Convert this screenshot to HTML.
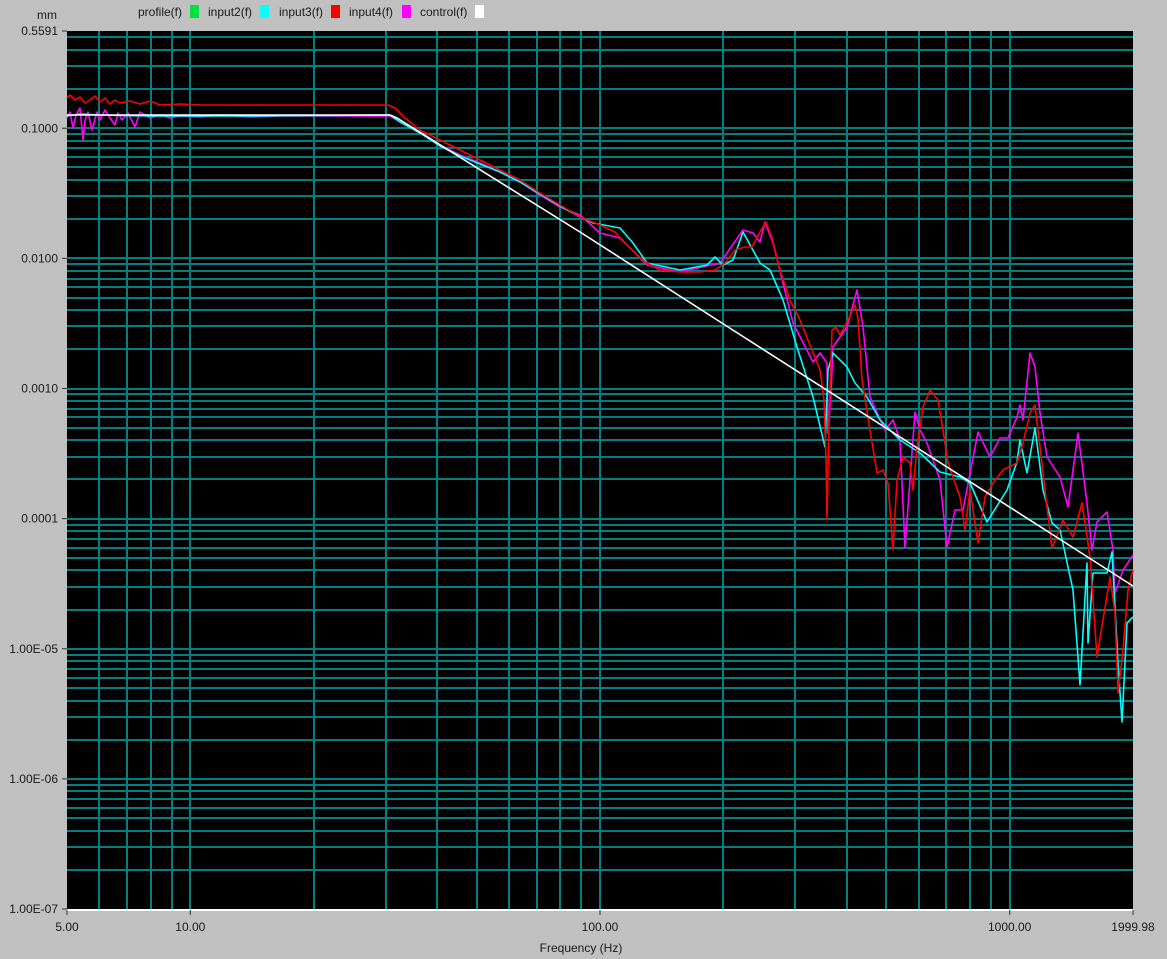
<!DOCTYPE html>
<html><head><meta charset="utf-8"><style>
html,body{margin:0;padding:0;background:#c0c0c0;width:1167px;height:959px;overflow:hidden}
svg{display:block}
text{font-family:"Liberation Sans",sans-serif;font-size:12px;fill:#1a1a1a}
</style></head><body>
<svg id="s" width="1167" height="959" xmlns="http://www.w3.org/2000/svg">
<rect x="0" y="0" width="1167" height="959" fill="#c0c0c0"/>
<rect x="67" y="31" width="1066" height="878" fill="#000"/>
<g id="grid" stroke="#008080" stroke-width="2"></g>
<line x1="67" y1="910" x2="1133" y2="910" stroke="#fff" stroke-width="2"/>
<g id="ticks" stroke="#333" stroke-width="1"></g>
<g fill="none" stroke-width="1.6" stroke-linejoin="round">
<polyline stroke="#ff00ff" points="67,118 70,112 73,128 76,115 80,108 83,140 85,120 88,112 92,130 97,112 100,120 105,110 110,118 115,125 118,113 122,120 128,113 135,127 140,112 150,118 160,115 170,118 180,116 200,117 220,115 250,117 280,116 320,116 360,116 390,116 400,122 420,132 440,145 460,155 480,163 500,172 520,182 540,195 560,207 580,215 600,233 620,238 647,265 680,272 720,263 743,230 753,233 760,242 765,222 773,243 793,323 813,362 820,353 827,363 828,433 831,393 833,347 847,327 857,290 863,327 870,397 885,430 893,420 900,440 905,548 910,480 915,412 920,430 927,443 940,480 947,547 955,510 963,510 978,432 990,457 1000,438 1008,438 1017,417 1020,405 1023,420 1030,353 1035,367 1040,413 1047,457 1060,477 1068,507 1078,433 1087,503 1092,550 1097,522 1107,512 1113,550 1115,593 1123,570 1133,555"/>
<polyline stroke="#00ffff" points="67,116 80,114 100,115 150,116 250,116 390,115 400,122 420,133 440,146 460,156 480,164 500,172 520,182 540,194 560,206 580,217 593,223 620,228 633,243 647,263 680,270 707,265 715,257 723,265 733,260 743,232 760,263 770,270 783,300 797,347 813,397 825,447 828,370 833,353 847,367 855,383 867,397 880,420 900,440 920,453 940,472 960,477 970,483 987,522 1007,490 1017,462 1020,440 1027,473 1035,428 1043,490 1052,523 1060,530 1073,590 1080,685 1087,563 1088,643 1093,573 1107,573 1112,552 1118,663 1122,722 1127,623 1133,617"/>
<polyline stroke="#ff0000" points="67,98 70,95 75,100 80,97 85,103 90,100 95,96 100,102 105,98 110,104 115,100 120,103 130,101 140,104 150,101 160,105 180,104 200,105 250,105 300,105 350,105 388,105 395,108 405,118 420,130 440,140 460,150 480,160 500,170 520,180 540,193 560,205 580,217 600,225 615,232 630,248 645,262 660,270 680,272 700,272 715,270 725,263 735,250 745,247 752,247 760,232 766,222 772,238 780,270 790,300 800,320 810,345 820,370 824,400 826,460 827,520 829,420 832,330 836,327 840,335 848,320 855,305 858,318 862,380 870,430 877,473 883,470 888,483 893,550 897,480 903,457 910,463 913,490 917,447 923,407 930,390 938,400 943,430 948,463 960,497 965,530 970,490 978,543 985,497 993,483 1003,470 1017,463 1023,443 1030,413 1035,405 1040,447 1047,507 1052,548 1063,520 1073,537 1082,503 1090,557 1097,657 1103,620 1110,577 1115,613 1118,693 1123,650 1128,590 1133,570"/>
<polyline stroke="#ffffff" points="67,115 390,115 397,118 580,232 725,325 1133,586"/>
</g>
<g id="labels"></g>
<text x="37" y="19" font-size="11">mm</text>
<text x="138" y="16">profile(f)</text><rect x="190" y="5" width="9" height="13" fill="#00e040"/>
<text x="208" y="16">input2(f)</text><rect x="260" y="5" width="9" height="13" fill="#00ffff"/>
<text x="279" y="16">input3(f)</text><rect x="331" y="5" width="9" height="13" fill="#ff0000"/>
<text x="349" y="16">input4(f)</text><rect x="402" y="5" width="9" height="13" fill="#ff00ff"/>
<text x="420" y="16">control(f)</text><rect x="475" y="5" width="9" height="13" fill="#ffffff"/>
<text x="581" y="952" text-anchor="middle">Frequency (Hz)</text>
</svg>
<script>
var ns="http://www.w3.org/2000/svg";
function el(p,t,a,txt){var e=document.createElementNS(ns,t);for(var k in a)e.setAttribute(k,a[k]);if(txt)e.textContent=txt;p.appendChild(e);return e;}
var g=document.getElementById('grid'),tk=document.getElementById('ticks'),lb=document.getElementById('labels');
var L=67,R=1133,T=31,B=909;
var ytop=Math.log10(0.5591),ybot=-7,py=(B-T)/(ytop-ybot);
function Y(v){return T+(ytop-Math.log10(v))*py;}
var xl=Math.log10(5),xr=Math.log10(1999.98),px=(R-L)/(xr-xl);
function X(f){return L+(Math.log10(f)-xl)*px;}
for(var d=-7;d<=-1;d++){for(var m=1;m<=9;m++){var v=m*Math.pow(10,d);if(v>0.5591)continue;var y=Math.round(Y(v));if(y>=B-1)continue;el(g,'line',{x1:L,y1:y,x2:R,y2:y});}}
for(var d=0;d<=3;d++){for(var m=1;m<=9;m++){var f=m*Math.pow(10,d);if(f<=5||f>=1999)continue;var x=Math.round(X(f));el(g,'line',{x1:x,y1:T,x2:x,y2:B});}}
var yl=[[0.5591,'0.5591'],[0.1,'0.1000'],[0.01,'0.0100'],[0.001,'0.0010'],[0.0001,'0.0001'],[1e-5,'1.00E-05'],[1e-6,'1.00E-06'],[1e-7,'1.00E-07']];
yl.forEach(function(a){var y=Y(a[0]);el(tk,'line',{x1:62,y1:y,x2:67,y2:y});el(lb,'text',{x:58,y:y+4,'text-anchor':'end'},a[1]);});
var xls=[[5,'5.00'],[10,'10.00'],[100,'100.00'],[1000,'1000.00'],[1999.98,'1999.98']];
xls.forEach(function(a){var x=X(a[0]);el(tk,'line',{x1:x,y1:910,x2:x,y2:915});el(lb,'text',{x:x,y:931,'text-anchor':'middle'},a[1]);});
</script>
</body></html>
